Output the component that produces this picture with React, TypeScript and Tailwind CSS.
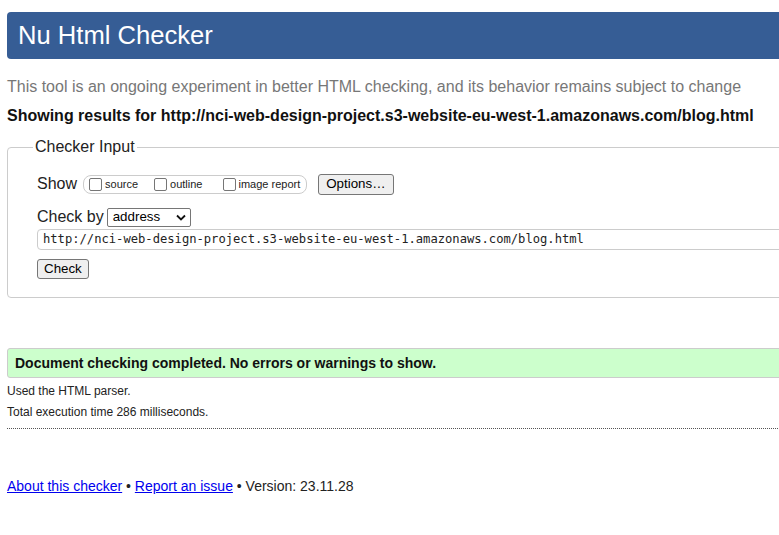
import React from 'react';

const url = 'http://nci-web-design-project.s3-website-eu-west-1.amazonaws.com/blog.html';

const Checkbox: React.FC<{ label: string; gap: string }> = ({ label, gap }) => (
  <label className={`flex items-center ${gap}`}>
    <span className="w-[13px] h-[13px] border border-[#767676] rounded-[2px] bg-white" />
    <span className="text-[11px] text-[#222]">{label}</span>
  </label>
);

const App: React.FC = () => {
  return (
    <div className="w-full h-[535px] overflow-hidden bg-white" style={{ fontFamily: '"Liberation Sans", Arial, sans-serif' }}>
      <div className="w-[1100px] pl-[7px] pt-[12px] text-[#222]">
        {/* header */}
        <div className="h-[47px] bg-[#365d95] rounded-[4px] flex items-center pl-[11px]">
          <h1 className="text-[25.6px] leading-none text-white">Nu Html Checker</h1>
        </div>

        <p className="mt-[18px] text-[16px] leading-[20px] text-[#777]">
          This tool is an ongoing experiment in better HTML checking, and its behavior remains subject to change
        </p>
        <p className="mt-[9px] text-[16px] leading-[20px] font-bold text-[#111]">Showing results for {url}</p>

        {/* checker input */}
        <fieldset className="mt-[11px] border border-[#ccc] rounded-[4px] pb-[17px]">
          <legend className="ml-[25px] px-[2px] text-[16px] leading-[20px] text-[#222]">Checker Input</legend>

          <div className="pl-[29px] pt-[16px]">
            <div className="flex items-center h-[22px]">
              <span className="text-[16px] mr-[6px]">Show</span>
              <div className="flex items-center h-[19px] border border-[#ccc] rounded-[8px] pl-[5px] pr-[6px]">
                <Checkbox label="source" gap="gap-[3px]" />
                <span className="w-[16px]" />
                <Checkbox label="outline" gap="gap-[3px]" />
                <span className="w-[21px]" />
                <Checkbox label="image report" gap="gap-[2px]" />
              </div>
              <button className="ml-[11px] h-[21px] px-[7px] bg-[#efefef] border border-[#767676] rounded-[3px] text-[13.33px] text-black leading-none">
                Options…
              </button>
            </div>

            <div className="flex items-center h-[22px] mt-[11px]">
              <span className="text-[16px] mr-[3px]">Check by</span>
              <div className="w-[84px] h-[19px] border border-[#767676] rounded-[2px] flex items-center justify-between pl-[5px] pr-[4px] bg-white">
                <span className="text-[13.33px] text-black">address</span>
                <svg width="10" height="7" viewBox="0 0 10 7">
                  <path d="M1 1.5 L5 5.5 L9 1.5" fill="none" stroke="#111" strokeWidth="1.8" />
                </svg>
              </div>
            </div>

            <div className="mt-[1px] h-[21px] border border-[#ccc] rounded-[4px] flex items-center pl-[5px]">
              <span className="text-[12.15px] text-[#222]" style={{ fontFamily: '"DejaVu Sans Mono", monospace' }}>{url}</span>
            </div>

            <button className="mt-[9px] h-[20px] px-[6px] bg-[#efefef] border border-[#767676] rounded-[3px] text-[13.33px] text-black leading-none">
              Check
            </button>
          </div>
        </fieldset>

        {/* result */}
        <div className="mt-[50px] h-[30px] bg-[#ccffcc] border border-[#ccc] rounded-[3px] flex items-center pl-[7px]">
          <span className="text-[14px] font-bold text-[#111]">Document checking completed. No errors or warnings to show.</span>
        </div>
        <p className="mt-[6px] text-[12px] leading-[15px]">Used the HTML parser.</p>
        <p className="mt-[6px] text-[12px] leading-[15px]">Total execution time 286 milliseconds.</p>
        <div className="mt-[8px] border-t border-dotted border-[#555]" />

        <p className="mt-[48px] text-[14px] leading-[18px] text-[#222]">
          <a href="#" className="text-[#0000ee] underline">About this checker</a>
          {' • '}
          <a href="#" className="text-[#0000ee] underline">Report an issue</a>
          {' • Version: 23.11.28'}
        </p>
      </div>
    </div>
  );
};

export default App;
